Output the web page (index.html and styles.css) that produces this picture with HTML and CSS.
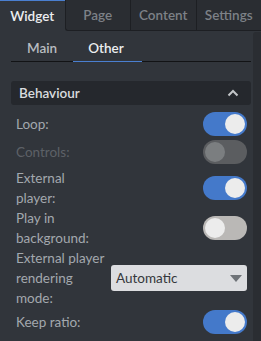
FILE: index.html
```html
<!DOCTYPE html>
<html lang="en">
  <head>
    <meta charset="UTF-8" />
    <title>Widget settings</title>
    <link rel="stylesheet" href="styles.css">
  </head>

  <body>
    <div class="tabs">
      <div class="tab active">Widget</div>
      <div class="tab">Page</div>
      <div class="tab">Content</div>
      <div class="tab">Settings</div>
    </div>

    <div class="panel">
      <div class="content">
        <div class="subtabs">
          <div class="subtab">Main</div>
          <div class="subtab current">Other</div>
        </div>

        <div class="section-head">
          <span>Behaviour</span>
          <svg class="chevron" width="12" height="8" viewBox="0 0 12 8">
            <polyline points="1.5,6.5 6,2 10.5,6.5" fill="none" stroke="#c3c6c9" stroke-width="2" />
          </svg>
        </div>

        <div class="rows">
          <div class="row">
            <label>Loop:</label>
            <span class="switch on"></span>
          </div>
          <div class="row disabled">
            <label>Controls:</label>
            <span class="switch"></span>
          </div>
          <div class="row">
            <label>External player:</label>
            <span class="switch on"></span>
          </div>
          <div class="row">
            <label>Play in background:</label>
            <span class="switch"></span>
          </div>
          <div class="row">
            <label>External player rendering mode:</label>
            <div class="select">
              <span>Automatic</span>
              <span class="caret"></span>
            </div>
          </div>
          <div class="row">
            <label>Keep ratio:</label>
            <span class="switch on"></span>
          </div>
        </div>
      </div>
      <div class="scrollbar"></div>
    </div>
  </body>
</html>
```

FILE: styles.css
```css
body {
  margin: 0;
  background-color: #31353b;
  font-family: Lato, "Liberation Sans", sans-serif;
  font-size: 13.5px;
  color: #a3a8ae;
  overflow: hidden;
}

.tabs {
  display: flex;
  height: 31px;
}

.tab {
  flex: 1;
  display: flex;
  align-items: center;
  justify-content: center;
  background-color: #2a2d32;
  border-left: 1px solid #1d1f23;
  border-bottom: 1px solid #1d1f23;
  color: #7d8187;
  font-weight: 600;
}

.tab.active {
  background-color: #31353b;
  border-left: 0;
  border-bottom: 0;
  border-top: 1px solid #4a7fd0;
  color: #eceef0;
}

.tab.active + .tab {
  border-bottom-left-radius: 3px;
}

.panel {
  display: flex;
  margin-top: 1px;
}

.content {
  flex: 1;
  padding: 0 2px 0 11px;
}

.scrollbar {
  width: 8px;
  height: 320px;
  background-color: #2a2d32;
  border-radius: 3px 0 0 0;
}

.subtabs {
  display: flex;
  margin-top: 7px;
  border-bottom: 1px solid #121315;
}

.subtab {
  padding: 0 16px;
  height: 22px;
  line-height: 19px;
  color: #b9bdc1;
  font-weight: 600;
}

.subtab.current {
  color: #eceef0;
  box-shadow: inset 0 -1px 0 #4a7fd0;
  margin-bottom: -1px;
  height: 23px;
  padding: 0 18px 0 15px;
}

.section-head {
  display: flex;
  align-items: center;
  justify-content: space-between;
  height: 24px;
  margin-top: 19px;
  padding: 0 12px 0 8px;
  background-color: #25282d;
  border-radius: 3px;
  color: #d9dcdf;
  font-weight: 600;
}

.rows {
  margin-top: 5px;
}

.row {
  display: grid;
  grid-template-columns: 90px 1fr;
  column-gap: 5px;
  align-items: center;
  min-height: 28px;
  padding: 0 4px 0 5px;
  line-height: 20px;
}

.row.disabled {
  color: #5d6167;
  margin-bottom: 2px;
}

.switch {
  justify-self: end;
  position: relative;
  width: 44px;
  height: 24px;
  border-radius: 12px;
  background-color: #bab8b6;
}

.switch::after {
  content: "";
  position: absolute;
  top: 2px;
  left: 2px;
  width: 20px;
  height: 20px;
  border-radius: 50%;
  background-color: #ececec;
}

.switch.on {
  background-color: #4479ca;
}

.switch.on::after {
  left: 22px;
}

.disabled .switch {
  background-color: #5b5d60;
}

.disabled .switch::after {
  background-color: #7b7e80;
}

.select {
  display: flex;
  align-items: center;
  justify-content: space-between;
  height: 26px;
  padding: 0 5px;
  background-color: #dcdde0;
  border-radius: 3px;
  color: #34373b;
}

.caret {
  width: 0;
  height: 0;
  border-left: 6px solid transparent;
  border-right: 6px solid transparent;
  border-top: 7px solid #6f7378;
}
```
